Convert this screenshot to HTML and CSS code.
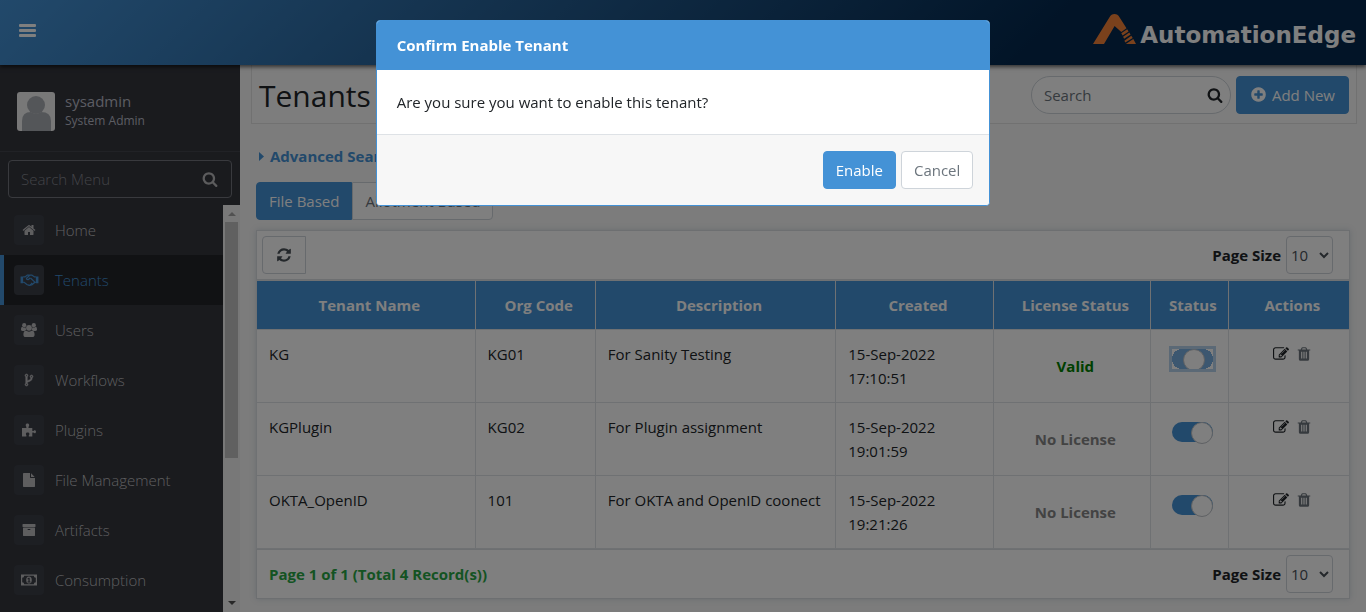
FILE: index.html
```html
<!DOCTYPE html>
<html lang="en">
<head>
<meta charset="utf-8">
<meta name="viewport" content="width=device-width, initial-scale=1">
<title>Tenants</title>
<link rel="stylesheet" href="styles.css">
</head>
<body>
<svg class="sprite" aria-hidden="true">
  <symbol id="search" viewBox="0 0 1792 1792"><path d="M1216 832q0-185-131.500-316.500t-316.500-131.500-316.500 131.500-131.500 316.500 131.500 316.500 316.500 131.500 316.500-131.500 131.500-316.500zm512 832q0 52-38 90t-90 38q-54 0-90-38l-343-342q-179 124-399 124-143 0-273.500-55.500t-225-150-150-225-55.500-273.500 55.500-273.500 150-225 225-150 273.500-55.500 273.500 55.500 225 150 150 225 55.500 273.500q0 220-124 399l343 343q37 37 37 90z"/></symbol>
  <symbol id="refresh" viewBox="0 0 1792 1792"><path d="M1639 1056q0 5-1 7-64 268-268 434.500t-478 166.500q-146 0-282.500-55t-243.500-157l-129 129q-19 19-45 19t-45-19-19-45v-448q0-26 19-45t45-19h448q26 0 45 19t19 45-19 45l-137 137q71 66 161 102t187 36q134 0 250-65t186-179q11-17 53-117 8-23 30-23h192q13 0 22.500 9.500t9.500 22.500zm25-800v448q0 26-19 45t-45 19h-448q-26 0-45-19t-19-45 19-45l138-138q-148-137-349-137-134 0-250 65t-186 179q-11 17-53 117-8 23-30 23h-199q-13 0-22.500-9.500t-9.500-22.500v-7q65-268 270-434.500t480-166.500q146 0 284 55.500t245 156.500l130-129q19-19 45-19t45 19 19 45z"/></symbol>
  <symbol id="home" viewBox="0 0 1792 1792"><path d="M1472 992v480q0 26-19 45t-45 19h-384v-384h-256v384h-384q-26 0-45-19t-19-45v-480q0-1 .5-3t.5-3l575-474 575 474q1 2 1 6zm223-69l-62 74q-8 9-21 11h-3q-13 0-21-7l-692-577-692 577q-12 8-24 7-13-2-21-11l-62-74q-8-10-7-23.500t11-21.500l719-599q32-26 76-26t76 26l244 204v-195q0-14 9-23t23-9h192q14 0 23 9t9 23v408l219 182q10 8 11 21.500t-7 23.500z"/></symbol>
  <symbol id="plus" viewBox="0 0 1792 1792"><path d="M1344 960v-128q0-26-19-45t-45-19h-256v-256q0-26-19-45t-45-19h-128q-26 0-45 19t-19 45v256h-256q-26 0-45 19t-19 45v128q0 26 19 45t45 19h256v256q0 26 19 45t45 19h128q26 0 45-19t19-45v-256h256q26 0 45-19t19-45zm320-64q0 209-103 385.500t-279.500 279.500-385.500 103-385.500-103-279.500-279.500-103-385.500 103-385.500 279.500-279.500 385.500-103 385.500 103 279.500 279.500 103 385.500z"/></symbol>
  <symbol id="trash" viewBox="0 0 1792 1792"><path d="M704 1376v-704q0-14-9-23t-23-9h-64q-14 0-23 9t-9 23v704q0 14 9 23t23 9h64q14 0 23-9t9-23zm256 0v-704q0-14-9-23t-23-9h-64q-14 0-23 9t-9 23v704q0 14 9 23t23 9h64q14 0 23-9t9-23zm256 0v-704q0-14-9-23t-23-9h-64q-14 0-23 9t-9 23v704q0 14 9 23t23 9h64q14 0 23-9t9-23zm-544-992h448l-48-117q-7-9-17-11h-317q-10 2-17 11zm928 32v64q0 14-9 23t-23 9h-96v948q0 83-47 143.500t-113 60.500h-832q-66 0-113-58.500t-47-141.500v-952h-96q-14 0-23-9t-9-23v-64q0-14 9-23t23-9h309l70-167q15-37 54-63t79-26h320q40 0 79 26t54 63l70 167h309q14 0 23 9t9 23z"/></symbol>
  <symbol id="edit" viewBox="0 0 1792 1792"><path d="M888 1184l116-116-152-152-116 116v56h96v96h56zm440-720q-16-16-33 1l-350 350q-17 17-1 33t33-1l350-350q17-17 1-33zm80 594v190q0 119-84.500 203.500t-203.500 84.500h-832q-119 0-203.500-84.500t-84.500-203.500v-832q0-119 84.500-203.500t203.500-84.500h832q63 0 117 25 15 7 18 23 3 17-9 29l-49 49q-14 14-32 8-23-6-45-6h-832q-66 0-113 47t-47 113v832q0 66 47 113t113 47h832q66 0 113-47t47-113v-126q0-13 9-22l64-64q15-15 35-7t20 29zm-96-738l288 288-672 672h-288v-288zm444 132l-92 92-288-288 92-92q28-28 68-28t68 28l152 152q28 28 28 68t-28 68z"/></symbol>
  <symbol id="archive" viewBox="0 0 1792 1792"><path d="M1088 832q0-26-19-45t-45-19h-256q-26 0-45 19t-19 45 19 45 45 19h256q26 0 45-19t19-45zm576-192v960q0 26-19 45t-45 19h-1408q-26 0-45-19t-19-45v-960q0-26 19-45t45-19h1408q26 0 45 19t19 45zm64-448v256q0 26-19 45t-45 19h-1536q-26 0-45-19t-19-45v-256q0-26 19-45t45-19h1536q26 0 45 19t19 45z"/></symbol>
  <symbol id="file" viewBox="0 0 1792 1792"><path d="M1152 512v-472q22 14 36 28l408 408q14 14 28 36h-472zm-128 32q0 40 28 68t68 28h544v1056q0 40-28 68t-68 28h-1344q-40 0-68-28t-28-68v-1600q0-40 28-68t68-28h800v544z"/></symbol>
  <symbol id="fork" viewBox="0 0 1792 1792"><path d="M672 1472q0-40-28-68t-68-28-68 28-28 68 28 68 68 28 68-28 28-68zm0-1152q0-40-28-68t-68-28-68 28-28 68 28 68 68 28 68-28 28-68zm640 128q0-40-28-68t-68-28-68 28-28 68 28 68 68 28 68-28 28-68zm96 0q0 52-26 96.500t-70 69.500q-2 287-226 414-67 38-203 81-128 40-169.500 71t-41.500 100v26q44 25 70 69.500t26 96.500q0 80-56 136t-136 56-136-56-56-136q0-52 26-96.500t70-69.500v-820q-44-25-70-69.500t-26-96.500q0-80 56-136t136-56 136 56 56 136q0 52-26 96.500t-70 69.500v497q54-26 154-57 55-17 87.500-29.500t70.500-31 59-39.500 40.500-51 28-69.500 8.500-91.500q-44-25-70-69.500t-26-96.500q0-80 56-136t136-56 136 56 56 136z" stroke="currentColor" stroke-width="70"/></symbol>
  <symbol id="users" viewBox="0 0 16 14"><circle cx="3.200" cy="2.200" r="2.100"/><circle cx="12.800" cy="2.200" r="2.100"/><path d="M1.300 3.800C.3 4 0 5.400 0 6.600 0 7.600.6 8 1.500 8h2.100c.4-.6 1-1 1.700-1.100-.4-.8-.6-1.500-.5-2.500-1 .4-2.400.3-3.500-.6zM14.700 3.800c1 .2 1.300 1.600 1.300 2.800 0 1-.6 1.400-1.500 1.400h-2.100c-.4-.6-1-1-1.700-1.100.4-.8.600-1.500.5-2.500 1 .4 2.400.3 3.500-.6z"/><circle cx="8" cy="4.800" r="2.900"/><path d="M4.800 7.500C3 7.600 2.400 9.700 2.400 11.700 2.400 13.200 3.300 14 4.600 14h6.800c1.300 0 2.200-.8 2.200-2.300 0-2-.6-4.100-2.400-4.200-1.900 1.500-4.500 1.500-6.400 0z"/></symbol>
  <symbol id="plug" viewBox="0 0 14 13"><path d="M4.200 4.500C5 3.400 3.700 2.900 3.700 1.700 3.700.7 4.400 0 5.400 0s1.800.7 1.800 1.700c0 1.200-1.300 1.700-.5 2.800h3.600v2.800c1 .8 1.500-.5 2.400-.5.8 0 1.300.6 1.300 1.500S13.500 9.800 12.700 9.800c-.9 0-1.400-1.200-2.400-.5V13H7c-.8-1 .4-1.500.4-2.600C7.400 9.500 6.500 9 5.600 9S3.900 9.500 3.900 10.400C3.900 11.500 5 12 4.200 13H0V4.500z"/></symbol>
  <symbol id="money" viewBox="0 0 16 11"><path fill-rule="evenodd" d="M0 0h16v11H0zM3.200 1.200A2 2 0 0 1 1.200 3.200v4.600a2 2 0 0 1 2 2h9.600a2 2 0 0 1 2-2V3.200a2 2 0 0 1-2-2zM8 2a2.800 3.500 0 1 1 0 7 2.800 3.500 0 0 1 0-7zm-.5 1.300-1.200 1 .5.600.6-.4v2.400h-.9V8h3V6.900h-.8V3.300z"/></symbol>
  <symbol id="handshake" viewBox="0 0 20 13"><path d="M1 2.800h2.300v7H.6v-7zM19 2.800h-2.300v7h2.700v-7z"/><path d="M3.300 3.300h2l2.400-2h2.200M16.700 3.300h-1.500l-2.700-2h-2L7 4.500c-.7.900.8 2 1.900 1.400l2-1.700M16.700 9.100h-1.300l-2.700 2.300-1.500.4-1.600.4-2.400-1-2.800-2.300H3.300M11.300 4.600l4.300 4.100M9 12l.5-.5M11.300 11.600l-.8-.8M12.900 10.700l-1.200-1" fill="none" stroke="currentColor" stroke-width="1.300"/></symbol>
</svg>

<header class="topbar">
  <button class="burger" aria-label="Toggle menu"><svg viewBox="0 0 17 14"><path d="M1 0h15q1 0 1 1v1q0 1-1 1H1Q0 3 0 2V1q0-1 1-1zm0 5h15q1 0 1 1v1q0 1-1 1H1Q0 8 0 7V6q0-1 1-1zm0 5h15q1 0 1 1v1q0 1-1 1H1q-1 0-1-1v-1q0-1 1-1z"/></svg></button>
  <a class="brand" href="#">
    <svg viewBox="0 0 43 30" aria-hidden="true"><path d="M0 30 16.500 3.200Q18.300 0 21.500 0t5 3.200L33.500 14.200 28.300 18 21.600 12 11 30z"/><path d="m34.200 15.200 1.400 2.200-6 4-1.300-2.200zM36.300 18.500l1.300 2.100-6.500 4.200-1-2zM38.300 21.700l1.400 2.200-7.400 4.600-.9-1.800zM40.300 25 43 30H32.800z"/></svg>
    <span>AutomationEdge</span>
  </a>
</header>

<div class="shell">
  <aside class="sidebar">
    <div class="user">
      <svg class="avatar" viewBox="0 0 38 39" aria-hidden="true"><rect width="38" height="39" rx="3" fill="#f0f0f0"/><circle cx="19" cy="13" r="9" fill="#a9adb3"/><path d="M5 39V29Q5 20 14 20q5 3.500 10 0 10 0 10 9v10z" fill="#a9adb3"/></svg>
      <div><div class="user-name">sysadmin</div><div class="user-role">System Admin</div></div>
    </div>
    <div class="menu-search">
      <input type="text" placeholder="Search Menu" aria-label="Search Menu">
      <button aria-label="Search menu"><svg><use href="#search"/></svg></button>
    </div>
    <div class="menu-wrap">
      <nav class="menu">
        <a href="#"><span class="tile"><svg><use href="#home"/></svg></span>Home</a>
        <a href="#" class="active"><span class="tile"><svg class="wide"><use href="#handshake"/></svg></span>Tenants</a>
        <a href="#"><span class="tile"><svg class="mid"><use href="#users"/></svg></span>Users</a>
        <a href="#"><span class="tile"><svg><use href="#fork"/></svg></span>Workflows</a>
        <a href="#"><span class="tile"><svg><use href="#plug"/></svg></span>Plugins</a>
        <a href="#"><span class="tile"><svg><use href="#file"/></svg></span>File Management</a>
        <a href="#"><span class="tile"><svg><use href="#archive"/></svg></span>Artifacts</a>
        <a href="#"><span class="tile"><svg class="mid"><use href="#money"/></svg></span>Consumption</a>
      </nav>
      <div class="scrollbar" aria-hidden="true"><i class="up"></i><i class="thumb"></i><i class="down"></i></div>
    </div>
  </aside>

  <main class="content">
    <div class="titlebar">
      <h1>Tenants</h1>
      <div class="search">
        <input type="text" placeholder="Search" aria-label="Search">
        <button aria-label="Search"><svg><use href="#search"/></svg></button>
      </div>
      <button class="btn primary add"><svg><use href="#plus"/></svg>Add New</button>
    </div>

    <div class="body">
      <a class="advanced" href="#"><svg viewBox="0 0 5 9"><path d="M0 0l5 4.500L0 9z"/></svg>Advanced Search</a>
      <div class="tabs"><button class="tab on">File Based</button><button class="tab">Allotment Based</button></div>

      <section class="panel">
        <div class="bar">
          <button class="refresh" aria-label="Refresh"><svg><use href="#refresh"/></svg></button>
          <div class="size"><label for="size-top">Page Size</label><select id="size-top"><option>10</option></select></div>
        </div>
        <table>
          <colgroup><col class="c-name"><col class="c-org"><col class="c-desc"><col class="c-date"><col class="c-date"><col class="c-status"><col></colgroup>
          <thead><tr><th>Tenant Name</th><th>Org Code</th><th>Description</th><th>Created</th><th>License Status</th><th>Status</th><th>Actions</th></tr></thead>
          <tbody>
            <tr><td>KG</td><td>KG01</td><td>For Sanity Testing</td><td>15-Sep-2022<br>17:10:51</td><td class="license valid">Valid</td><td class="center"><input type="checkbox" class="switch moving" aria-label="KG status"></td><td class="center"><button class="act" aria-label="Edit"><svg><use href="#edit"/></svg></button><button class="act del" aria-label="Delete"><svg><use href="#trash"/></svg></button></td></tr>
            <tr><td>KGPlugin</td><td>KG02</td><td>For Plugin assignment</td><td>15-Sep-2022<br>19:01:59</td><td class="license">No License</td><td class="center"><input type="checkbox" class="switch" checked aria-label="KGPlugin status"></td><td class="center"><button class="act" aria-label="Edit"><svg><use href="#edit"/></svg></button><button class="act del" aria-label="Delete"><svg><use href="#trash"/></svg></button></td></tr>
            <tr><td>OKTA_OpenID</td><td>101</td><td>For OKTA and OpenID coonect</td><td>15-Sep-2022<br>19:21:26</td><td class="license">No License</td><td class="center"><input type="checkbox" class="switch" checked aria-label="OKTA_OpenID status"></td><td class="center"><button class="act" aria-label="Edit"><svg><use href="#edit"/></svg></button><button class="act del" aria-label="Delete"><svg><use href="#trash"/></svg></button></td></tr>
          </tbody>
        </table>
        <div class="bar foot">
          <span class="records">Page 1 of 1 (Total 4 Record(s))</span>
          <div class="size"><label for="size-bottom">Page Size</label><select id="size-bottom"><option>10</option></select></div>
        </div>
      </section>
    </div>
  </main>
</div>

<div class="backdrop">
  <div class="modal" role="dialog" aria-modal="true" aria-labelledby="dialog-title">
    <h2 id="dialog-title">Confirm Enable Tenant</h2>
    <p>Are you sure you want to enable this tenant?</p>
    <div class="modal-foot"><button class="btn primary">Enable</button><button class="btn plain">Cancel</button></div>
  </div>
</div>
</body>
</html>
```
FILE: styles.css
```css
* { box-sizing: border-box; }
body {
  margin: 0;
  height: 100vh;
  overflow: hidden;
  display: flex;
  flex-direction: column;
  background: #f8f8f8;
  color: #212529;
  font: 15px/24px "Open Sans", "Noto Sans", sans-serif;
}
button, input, select { font: inherit; color: inherit; }
button { cursor: pointer; }
a { text-decoration: none; color: inherit; }
svg { display: block; fill: currentColor; width: 16px; height: 16px; }
.sprite { position: absolute; width: 0; height: 0; }

.topbar {
  position: relative;
  z-index: 1;
  flex: none;
  height: 65px;
  padding: 0 10px 0 19px;
  display: flex;
  align-items: center;
  justify-content: space-between;
  background: linear-gradient(135deg, #4492d6 0%, #04294f 75%, #04294f 100%);
  box-shadow: 0 2px 4px rgba(0, 0, 0, .6);
}
.burger { border: 0; background: none; padding: 0; color: #fff; margin-bottom: 4px; }
.burger svg { width: 17px; height: 14px; }
.brand { display: flex; align-items: flex-end; gap: 4px; color: #fff; margin-bottom: 6px; }
.brand svg { width: 43px; height: 30px; margin-bottom: 2px; fill: #f58238; }
.brand span { font: bold 23px/22px "DejaVu Sans", sans-serif; }

.shell { flex: 1; min-height: 0; display: flex; }
.sidebar { width: 240px; flex: none; display: flex; flex-direction: column; background: #34363d; }
.user { display: flex; align-items: center; gap: 10px; height: 87px; padding: 6px 17px 0; border-bottom: 1px solid #42444c; color: #b8bac6; }
.avatar { width: 38px; height: 39px; }
.user-name { line-height: 20px; }
.user-role { font-size: 12px; line-height: 20px; }
.menu-search { display: flex; align-items: center; margin: 8px 8px 7px; height: 38px; padding: 0 13px 0 12px; border: 1px solid #73757c; border-radius: 4px; }
.menu-search input { flex: 1; min-width: 0; padding: 0; border: 0; background: none; font-weight: 300; }
.menu-search input::placeholder { color: #85878e; opacity: 1; }
.menu-search button { border: 0; padding: 0; background: none; color: #b8b8ba; }
.menu-wrap { flex: 1; min-height: 0; display: flex; }
.menu { flex: 1; overflow: hidden; }
.menu a { display: flex; align-items: center; gap: 11px; height: 50px; padding-left: 14px; color: #bcbcbf; font-weight: 300; }
.menu a.active { background: #222428; color: #4492d6; border-left: 4px solid #4492d6; padding-left: 10px; }
.tile { width: 30px; height: 30px; display: grid; place-items: center; border-radius: 4px; background: #3b3e47; }
.tile svg { width: 14px; height: 14px; }
.tile svg.mid { width: 16px; }
.tile svg.wide { width: 19px; }
.scrollbar { width: 17px; display: flex; flex-direction: column; align-items: center; background: #f1f1f1; }
.scrollbar .up, .scrollbar .down { border: 4px solid transparent; width: 0; height: 0; }
.scrollbar .up { border-top: 0; border-bottom-color: #a3a3a3; margin: 7px 0 6px; }
.scrollbar .down { border-bottom: 0; border-top-color: #505050; margin: auto 0 7px; }
.scrollbar .thumb { width: 13px; height: 58%; margin-bottom: 6px; background: #c1c1c1; flex-shrink: 0; }

.content { flex: 1; min-width: 0; padding: 0 9px 0 11px; }
.titlebar { display: flex; align-items: center; height: 59px; padding: 1px 7px 0 7px; border: 1px solid #e3e3e3; border-top: 0; background: #fafafa; }
h1 { margin: 0 auto 0 0; padding-top: 2px; font-size: 30px; line-height: 36px; font-weight: 400; }
.search { display: flex; align-items: center; width: 200px; height: 38px; padding: 0 7px 0 12px; margin-right: 5px; border: 1px solid #ced4da; border-radius: 20px; background: #fff; }
.search input { flex: 1; min-width: 0; border: 0; padding: 0; background: none; }
.search input::placeholder { color: #6c757d; opacity: 1; }
.search button { border: 0; padding: 0; background: none; }
.btn { display: inline-flex; align-items: center; height: 38px; padding: 0 12px; border: 1px solid #4492d6; border-radius: 4px; }
.btn svg { margin-right: 5px; width: 17px; height: 17px; }
.btn.add { padding: 0 13px; }
.primary { background: #4492d6; color: #fff; }
.plain { background: #fff; color: #6c757d; border-color: #ced4da; }

.body { padding: 20px 7px 0 5px; }
.advanced { display: flex; align-items: center; gap: 6px; padding-left: 3px; color: #4492d6; font-weight: 700; }
.advanced svg { width: 5px; height: 9px; }
.tabs { display: flex; margin: 14px 0 10px; }
.tab { height: 38px; padding: 0 12px; border: 1px solid #ced4da; border-radius: 0 4px 4px 0; background: #fff; color: #6c757d; }
.tab.on { background: #4492d6; border-color: #4492d6; color: #fff; border-radius: 4px 0 0 4px; }

.panel { box-shadow: 0 0 6px rgba(100, 130, 160, .25); }
.bar { display: flex; align-items: center; justify-content: space-between; height: 50px; padding: 0 16px 0 5px; background: #fff; border: 1px solid #dadee2; }
.foot { padding-left: 12px; }
.refresh { width: 44px; height: 38px; display: grid; place-items: center; border: 1px solid #ced4da; border-radius: 4px 0 0 4px; background: #fff; color: #495057; }
.size { display: flex; align-items: center; gap: 5px; font-weight: 700; }
.size select { width: 47px; height: 38px; padding: 0; border: 1px solid #ced4da; border-radius: 4px; background: #fff; color: #495057; font-weight: 400; }
.records { color: #28a745; font-weight: 700; }
table { width: 100%; table-layout: fixed; border-collapse: collapse; background: #fff; }
.c-name { width: 20%; }
.c-org { width: 11%; }
.c-desc { width: 22%; }
.c-date { width: 14.4%; }
.c-status { width: 7.1%; }
th, td { border: 1px solid #dee2e6; padding: 12px 5px 12px 12px; vertical-align: top; text-align: left; }
th { background: #4492d6; color: #fff; text-align: center; font-weight: 700; }
.center { text-align: center; }
.license { vertical-align: middle; text-align: center; font-weight: 700; color: #868686; }
.license.valid { color: #008000; }
.switch { appearance: none; display: inline-flex; width: 41px; height: 20px; margin: 7px 0 0; border-radius: 10px; background: #4492d6; vertical-align: top; }
.switch::before { content: ""; width: 20px; height: 20px; margin-left: auto; border: 1px solid #bdc2c7; border-radius: 50%; background: #fff; }
.switch.moving {
  border-radius: 0;
  outline: 3px solid #b7d3ec;
  background:
    radial-gradient(circle at 10px 50%, #78aee0 10px, transparent 10px),
    radial-gradient(circle at 31px 50%, #78aee0 10px, transparent 10px),
    linear-gradient(#78aee0, #78aee0) center / 21px 100% no-repeat;
}
.switch.moving::before { margin-right: 8px; }
.act { border: 0; padding: 0; background: none; margin: 4px 4px; vertical-align: top; }
.act svg { width: 16px; height: 16px; }
.del { color: #6c757d; margin-left: 3px; }

.backdrop { position: fixed; inset: 0; z-index: 2; padding-top: 20px; background: rgba(0, 0, 0, .5); }
.modal { width: 45%; margin: 0 auto; border: 1px solid #4492d6; border-radius: 4px; overflow: hidden; background: #fff; }
.modal h2 { margin: 0; padding: 12px 20px 13px; background: #4492d6; color: #fff; font-size: 15px; line-height: 24px; }
.modal p { margin: 0; padding: 20px; }
.modal-foot { display: flex; justify-content: flex-end; gap: 5px; padding: 16px; border-top: 1px solid #dee2e6; background: #f7f7f7; }
```
